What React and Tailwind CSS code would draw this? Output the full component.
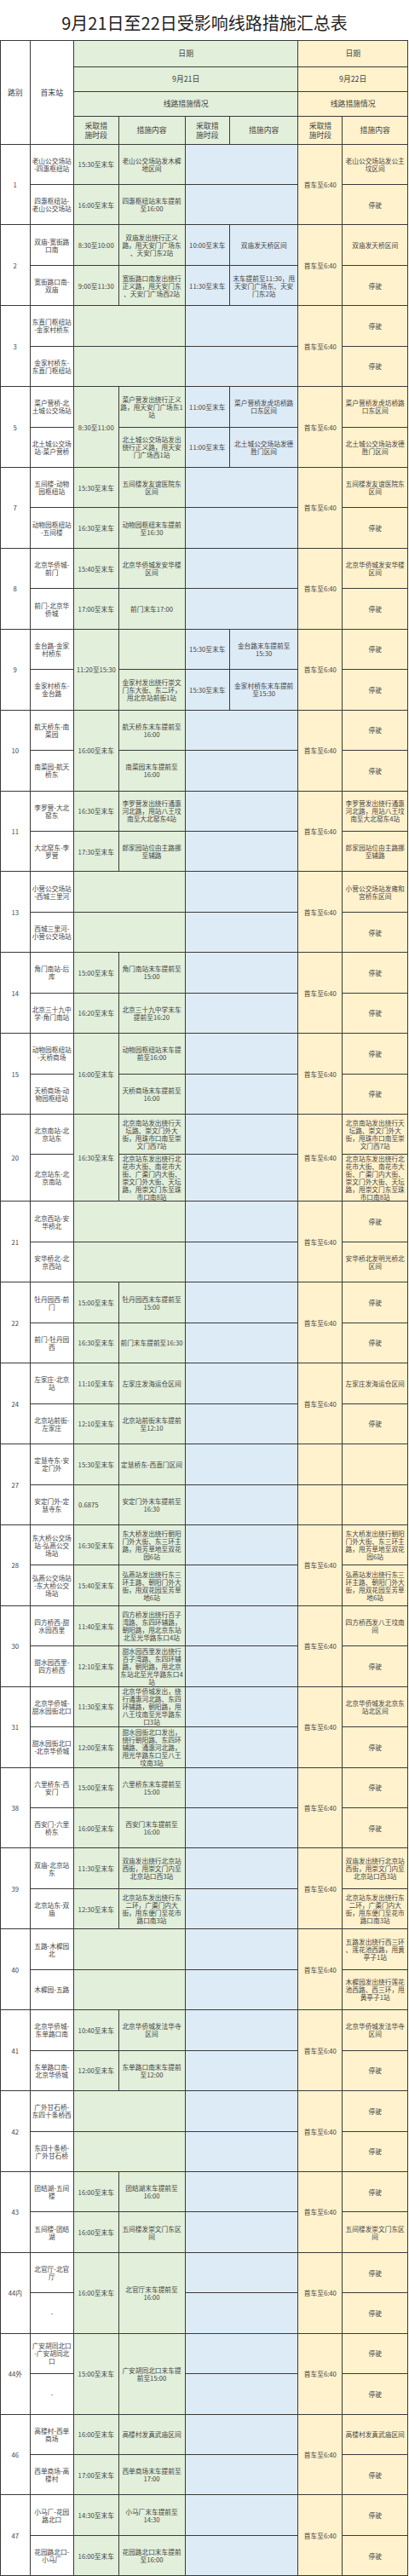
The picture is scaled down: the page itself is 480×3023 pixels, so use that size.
import React from 'react';

const FIRST = '首车至6:40';

// one entry per route, two sub-rows each
const routes = [
  { no: '1', rows: [
    { st: '老山公交场站\n-四惠枢纽站', t1: '15:30至末车', c1: '老山公交场站发木樨\n地区间', c8: '老山公交场站发公主\n坟区间' },
    { st: '四惠枢纽站-\n老山公交场站', t1: '16:00至末车', c1: '四惠枢纽站末车提前\n至16:00', c8: '停驶' },
  ] },
  { no: '2', rows: [
    { st: '双庙-宽街路\n口南', t1: '8:30至10:00', c1: '双庙发出绕行正义\n路，甩天安门广场东\n、天安门东2站', t2: '10:00至末车', c2: '双庙发天桥区间', c8: '双庙发天桥区间' },
    { st: '宽街路口南-\n双庙', t1: '9:00至11:30', c1: '宽街路口南发出绕行\n正义路，甩天安门东\n、天安门广场西2站', t2: '11:30至末车', c2: '末车提前至11:30，甩\n天安门广场东、天安\n门东2站', c8: '停驶' },
  ] },
  { no: '3', greenEmpty: true, rows: [
    { st: '东直门枢纽站\n-金家村桥东', c8: '停驶' },
    { st: '金家村桥东-\n东直门枢纽站', c8: '停驶' },
  ] },
  { no: '5', t1Span: '8:30至11:00', rows: [
    { st: '菜户营桥-北\n土城公交场站', c1: '菜户营发出绕行正义\n路，甩天安门广场东1\n站', t2: '11:00至末车', c2: '菜户营桥发虎坊桥路\n口东区间', c8: '菜户营桥发虎坊桥路\n口东区间' },
    { st: '北土城公交场\n站-菜户营桥', c1: '北土城公交场站发出\n绕行正义路，甩天安\n门广场西1站', t2: '11:00至末车', c2: '北土城公交场站发德\n胜门区间', c8: '北土城公交场站发德\n胜门区间' },
  ] },
  { no: '7', rows: [
    { st: '五间楼-动物\n园枢纽站', t1: '15:30至末车', c1: '五间楼发友谊医院东\n区间', c8: '五间楼发友谊医院东\n区间' },
    { st: '动物园枢纽站\n-五间楼', t1: '16:30至末车', c1: '动物园枢纽末车提前\n至16:30', c8: '停驶' },
  ] },
  { no: '8', rows: [
    { st: '北京华侨城-\n前门', t1: '15:40至末车', c1: '北京华侨城发安华楼\n区间', c8: '北京华侨城发安华楼\n区间' },
    { st: '前门-北京华\n侨城', t1: '17:00至末车', c1: '前门末车17:00', c8: '停驶' },
  ] },
  { no: '9', t1Span: '11:20至15:30', rows: [
    { st: '金台路-金家\n村桥东', c1: '', t2: '15:30至末车', c2: '金台路末车提前至\n15:30', c8: '停驶' },
    { st: '金家村桥东-\n金台路', c1: '金家村发出绕行崇文\n门东大街、东二环，\n甩北京站前街1站', t2: '15:30至末车', c2: '金家村桥东末车提前\n至15:30', c8: '停驶' },
  ] },
  { no: '10', t1Span: '16:00至末车', rows: [
    { st: '航天桥东-南\n菜园', c1: '航天桥东末车提前至\n16:00', c8: '停驶' },
    { st: '南菜园-航天\n桥东', c1: '南菜园末车提前至\n16:00', c8: '停驶' },
  ] },
  { no: '11', rows: [
    { st: '李罗营-大北\n窑东', t1: '16:30至末车', c1: '李罗营发出绕行通惠\n河北路，甩站八王坟\n南至大北窑东4站', c8: '李罗营发出绕行通惠\n河北路，甩站八王坟\n南至大北窑东4站' },
    { st: '大北窑东-李\n罗营', t1: '17:30至末车', c1: '郎家园站位由主路挪\n至辅路', c8: '郎家园站位由主路挪\n至辅路' },
  ] },
  { no: '13', greenEmpty: true, rows: [
    { st: '小营公交场站\n-西城三里河', c8: '小营公交场站发雍和\n宫桥东区间' },
    { st: '西城三里河-\n小营公交场站', c8: '停驶' },
  ] },
  { no: '14', rows: [
    { st: '角门南站-后\n库', t1: '15:00至末车', c1: '角门南站末车提前至\n15:00', c8: '停驶' },
    { st: '北京三十九中\n学-角门南站', t1: '16:20至末车', c1: '北京三十九中学末车\n提前至16:20', c8: '停驶' },
  ] },
  { no: '15', t1Span: '16:00至末车', rows: [
    { st: '动物园枢纽站\n-天桥商场', c1: '动物园枢纽站末车提\n前至16:00', c8: '停驶' },
    { st: '天桥商场-动\n物园枢纽站', c1: '天桥商场末车提前至\n16:00', c8: '停驶' },
  ] },
  { no: '20', t1Span: '16:30至末车', rows: [
    { st: '北京南站-北\n京站东', c1: '北京南站发出绕行天\n坛路、崇文门外大\n街，甩珠市口南至崇\n文门西7站', c8: '北京南站发出绕行天\n坛路、崇文门外大\n街，甩珠市口南至崇\n文门西7站' },
    { st: '北京站东-北\n京南站', tall: true, c1: '北京站东发出绕行北\n花市大街、南花市大\n街、广渠门内大街、\n崇文门外大街、天坛\n路，甩崇文门东至珠\n市口南8站', c8: '北京站东发出绕行北\n花市大街、南花市大\n街、广渠门内大街、\n崇文门外大街、天坛\n路，甩崇文门东至珠\n市口南8站' },
  ] },
  { no: '21', greenEmpty: true, rows: [
    { st: '北京西站-安\n华桥北', c8: '停驶' },
    { st: '安华桥北-北\n京西站', c8: '安华桥北发明光桥北\n区间' },
  ] },
  { no: '22', rows: [
    { st: '牡丹园西-前\n门', t1: '15:00至末车', c1: '牡丹园西末车提前至\n15:00', c8: '停驶' },
    { st: '前门-牡丹园\n西', t1: '16:30至末车', c1: '前门末车提前至16:30', c8: '停驶' },
  ] },
  { no: '24', rows: [
    { st: '左家庄-北京\n站', t1: '11:10至末车', c1: '左家庄发海运仓区间', c8: '左家庄发海运仓区间' },
    { st: '北京站前街-\n左家庄', t1: '12:10至末车', c1: '北京站前街末车提前\n至12:10', c8: '停驶' },
  ] },
  { no: '27', splitFirst: true, rows: [
    { st: '定慧寺东-安\n定门外', t1: '15:30至末车', c1: '定慧桥东-西直门区间', c8: '' },
    { st: '安定门外-定\n慧寺东', t1: '0.6875', t1Left: true, c1: '安定门外末车提前至\n16:30', c8: '' },
  ] },
  { no: '28', rows: [
    { st: '东大桥公交场\n站-弘燕公交\n场站', t1: '16:30至末车', c1: '东大桥发出绕行朝阳\n门外大街、东三环主\n路，甩芳草地至双花\n园6站', c8: '东大桥发出绕行朝阳\n门外大街、东三环主\n路，甩芳草地至双花\n园6站' },
    { st: '弘燕公交场站\n-东大桥公交\n场站', t1: '15:40至末车', c1: '弘燕站发出绕行东三\n环主路、朝阳门外大\n街，甩双花园至芳草\n地6站', c8: '弘燕站发出绕行东三\n环主路、朝阳门外大\n街，甩双花园至芳草\n地6站' },
  ] },
  { no: '30', rows: [
    { st: '四方桥西-甜\n水园西里', t1: '11:40至末车', c1: '四方桥发出绕行百子\n湾路、东四环辅路，\n朝阳路，甩北京东站\n北至光华路东口4站', c8: '四方桥西发八王坟南\n间' },
    { st: '甜水园西里-\n四方桥西', t1: '12:10至末车', c1: '甜水园西里发出绕行\n百子湾路、东四环辅\n路，朝阳路，甩北京\n东站北至光华路东口4\n站', c8: '停驶' },
  ] },
  { no: '31', rows: [
    { st: '北京华侨城-\n甜水园街北口', t1: '11:30至末车', c1: '北京华侨城发出，绕\n行通惠河北路、东四\n环辅路，朝阳路，甩\n八王坟南至光华路东\n口3站', c8: '北京华侨城发北京东\n站北区间' },
    { st: '甜水园街北口\n-北京华侨城', t1: '12:00至末车', c1: '甜水园街北口发出，\n绕行朝阳路、东四环\n辅路、通惠河北路，\n甩光华路东口至八王\n坟南3站', c8: '停驶' },
  ] },
  { no: '38', rows: [
    { st: '六里桥东-西\n安门', t1: '15:00至末车', c1: '六里桥东末车提前至\n15:00', c8: '停驶' },
    { st: '西安门-六里\n桥东', t1: '16:00至末车', c1: '西安门末车提前至\n16:00', c8: '停驶' },
  ] },
  { no: '39', rows: [
    { st: '双庙-北京站\n东', t1: '11:30至末车', c1: '双庙发出绕行北京站\n西街，甩崇文门内至\n北京站口西3站', c8: '双庙发出绕行北京站\n西街，甩崇文门内至\n北京站口西3站' },
    { st: '北京站东-双\n庙', t1: '12:30至末车', c1: '北京站东发出绕行东\n二环，广渠门内大\n街，甩东便门至花市\n路口南3站', c8: '北京站东发出绕行东\n二环，广渠门内大\n街，甩东便门至花市\n路口南3站' },
  ] },
  { no: '40', greenEmpty: true, rows: [
    { st: '五路-木樨园\n北', c8: '五路发出绕行西三环\n、莲花池西路，甩黄\n亭子1站' },
    { st: '木樨园-五路', c8: '木樨园发出绕行莲花\n池西路、西三环，甩\n黄亭子1站' },
  ] },
  { no: '41', rows: [
    { st: '北京华侨城-\n东单路口南', t1: '10:40至末车', c1: '北京华侨城发法华寺\n区间', c8: '北京华侨城发法华寺\n区间' },
    { st: '东单路口南-\n北京华侨城', t1: '12:00至末车', c1: '东单路口南末车提前\n至12:00', c8: '停驶' },
  ] },
  { no: '42', greenEmpty: true, rows: [
    { st: '广外甘石桥-\n东四十条桥西', c8: '停驶' },
    { st: '东四十条桥-\n广外甘石桥', c8: '停驶' },
  ] },
  { no: '43', rows: [
    { st: '团结湖-五间\n楼', t1: '16:00至末车', c1: '团结湖末车提前至\n16:00', c8: '停驶' },
    { st: '五间楼-团结\n湖', t1: '16:00至末车', c1: '五间楼发崇文门东区\n间', c8: '五间楼发崇文门东区\n间' },
  ] },
  { no: '44内', t1Span: '16:00至末车', c1Span: '北官厅末车提前至\n16:00', rows: [
    { st: '北官厅-北官\n厅', c8: '停驶' },
    { st: '-', c8: '停驶' },
  ] },
  { no: '44外', t1Span: '15:00至末车', c1Span: '广安胡同北口末车提\n前至15:00', rows: [
    { st: '广安胡同北口\n-广安胡同北\n口', c8: '停驶' },
    { st: '-', c8: '停驶' },
  ] },
  { no: '46', rows: [
    { st: '高楼村-西单\n商场', t1: '16:00至末车', c1: '高楼村发真武庙区间', c8: '高楼村发真武庙区间' },
    { st: '西单商场-高\n楼村', t1: '17:00至末车', c1: '西单商场末车提前至\n17:00', c8: '停驶' },
  ] },
  { no: '47', rows: [
    { st: '小马厂-花园\n路北口', t1: '14:30至末车', c1: '小马厂末车提前至\n14:30', c8: '停驶' },
    { st: '花园路北口-\n小马厂', t1: '16:00至末车', c1: '花园路北口末车提前\n至16:00', c8: '停驶' },
  ] },
];

const base = 'border border-[#3a3a3a] p-0 align-middle whitespace-pre overflow-hidden';
const body = `${base} text-center text-[7.7px] leading-[9px] text-[#444]`;
const head = `${base} text-center text-[8.8px] leading-[11px] text-[#444]`;

const WHITE = 'bg-white';
const GREEN = 'bg-[#e2efda]';
const BLUE = 'bg-[#ddebf7]';
const YELLOW = 'bg-[#fff2cc]';

const tight = s => (s && s.split('\n').length >= 6 ? ' leading-[8.6px]' : '');

function RouteRows({ r }) {
  return r.rows.map((row, i) => (
    <tr key={i} className={row.tall ? 'h-[54px]' : 'h-[47.44px]'}>
      {i === 0 && <td rowSpan={2} className={`${body} ${WHITE}`}>{r.no}</td>}
      <td className={`${body} ${WHITE}`}>{row.st}</td>

      {r.greenEmpty ? (
        <td colSpan={2} className={`${body} ${GREEN}`} />
      ) : (
        <>
          {r.t1Span
            ? i === 0 && <td rowSpan={2} className={`${body} ${GREEN}`}>{r.t1Span}</td>
            : <td className={`${body} ${GREEN} ${row.t1Left ? '!text-left pl-[5px]' : ''}`}>{row.t1}</td>}
          {r.c1Span
            ? i === 0 && <td rowSpan={2} className={`${body} ${GREEN}`}>{r.c1Span}</td>
            : <td className={`${body} ${GREEN}${tight(row.c1)}`}>{row.c1}</td>}
        </>
      )}

      {row.t2 == null && row.c2 == null ? (
        <td colSpan={2} className={`${body} ${BLUE}`} />
      ) : (
        <>
          <td className={`${body} ${BLUE}`}>{row.t2}</td>
          <td className={`${body} ${BLUE}`}>{row.c2}</td>
        </>
      )}

      {r.splitFirst
        ? <td className={`${body} ${YELLOW}`} />
        : i === 0 && <td rowSpan={2} className={`${body} ${YELLOW}`}>{FIRST}</td>}
      <td className={`${body} ${YELLOW}${tight(row.c8)}`}>{row.c8}</td>
    </tr>
  ));
}

export default function App() {
  return (
    <div className="w-[480px] bg-white font-['Noto_Sans_CJK_SC','Noto_Sans',sans-serif]">
      {/* Title */}
      <div className="h-[47px] pt-[6px] flex items-center justify-center text-[20px] text-[#222] whitespace-nowrap">
        9月21日至22日受影响线路措施汇总表
      </div>

      <table className="w-[478px] table-fixed border-collapse">
        <colgroup>
          <col className="w-[34.5px]" />
          <col className="w-[51.5px]" />
          <col className="w-[52.5px]" />
          <col className="w-[78px]" />
          <col className="w-[52.5px]" />
          <col className="w-[80.3px]" />
          <col className="w-[52px]" />
          <col className="w-[76.7px]" />
        </colgroup>
        <tbody>
          <tr className="h-[30.5px]">
            <td rowSpan={4} className={`${head} ${WHITE}`}>路别</td>
            <td rowSpan={4} className={`${head} ${WHITE}`}>首末站</td>
            <td colSpan={4} className={`${head} ${GREEN}`}>日期</td>
            <td colSpan={2} className={`${head} ${YELLOW}`}>日期</td>
          </tr>
          <tr className="h-[29px]">
            <td colSpan={4} className={`${head} ${GREEN}`}>9月21日</td>
            <td colSpan={2} className={`${head} ${YELLOW}`}>9月22日</td>
          </tr>
          <tr className="h-[29px]">
            <td colSpan={4} className={`${head} ${GREEN}`}>线路措施情况</td>
            <td colSpan={2} className={`${head} ${YELLOW}`}>线路措施情况</td>
          </tr>
          <tr className="h-[33px]">
            <td className={`${head} ${GREEN}`}>{'采取措\n施时段'}</td>
            <td className={`${head} ${GREEN}`}>措施内容</td>
            <td className={`${head} ${GREEN}`}>{'采取措\n施时段'}</td>
            <td className={`${head} ${GREEN}`}>措施内容</td>
            <td className={`${head} ${YELLOW}`}>{'采取措\n施时段'}</td>
            <td className={`${head} ${YELLOW}`}>措施内容</td>
          </tr>
          {routes.map(r => <RouteRows key={r.no} r={r} />)}
        </tbody>
      </table>
    </div>
  );
}
